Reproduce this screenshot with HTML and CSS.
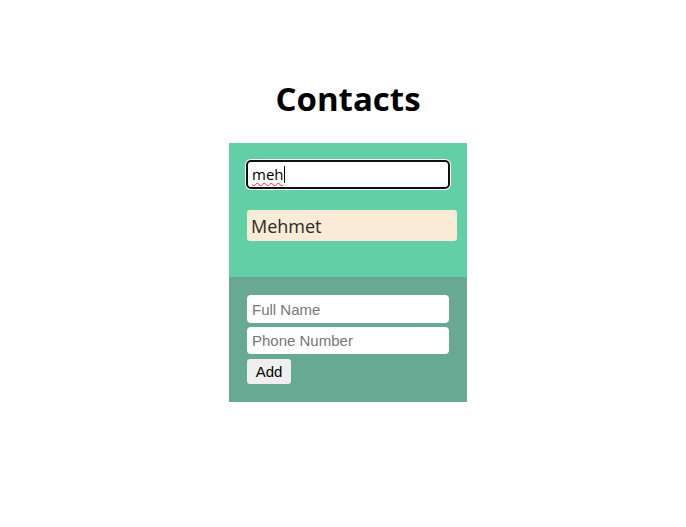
FILE: index.html
```html
<!DOCTYPE html>
<html>
<head>
<meta charset="utf-8">
<link rel="stylesheet" href="styles.css">
</head>
<body>
<div class="page">
  <h1 class="title">Contacts</h1>
  <div class="box">
    <div class="list-section">
      <div class="search">meh<span class="caret"></span></div>
      <ul class="list">
        <li class="item">Mehmet</li>
      </ul>
    </div>
    <div class="form-section">
      <input class="field" type="text" placeholder="Full Name">
      <input class="field" type="text" placeholder="Phone Number">
      <button class="add">Add</button>
    </div>
  </div>
</div>
</body>
</html>
```

FILE: styles.css
```css
html, body { margin: 0; padding: 0; background: #fff; }
body { font-family: "Open Sans", "Liberation Sans", sans-serif; }
.page {
  display: flex;
  flex-direction: column;
  align-items: center;
  padding-left: 10px;
  padding-top: 74px;
}
.title {
  margin: 0 0 20px 0;
  font-size: 33px;
  font-weight: 700;
  line-height: 49px;
  color: #000;
}
.box { width: 238px; }
.list-section {
  background: #62cfa6;
  padding: 17px 10px 36px 18px;
}
.search {
  box-sizing: border-box;
  width: 204px;
  height: 29px;
  margin-left: -1px;
  border: 2px solid #111;
  border-radius: 5px;
  background: #fff;
  box-shadow: 0 0 0 1px #fff;
  padding: 2px 0 0 4px;
  font-family: "Open Sans", sans-serif;
  font-size: 15px;
  line-height: 20px;
  color: #000;
  text-decoration: underline wavy #e53030;
  text-decoration-thickness: 1px;
  text-underline-offset: 2px;
}
.caret {
  display: inline-block;
  width: 1px;
  height: 17px;
  background: #000;
  vertical-align: -3px;
}
.list { list-style: none; margin: 21px 0 0 0; padding: 0; }
.item {
  background: #faebd7;
  border-radius: 3px;
  height: 31px;
  padding-left: 4px;
  font-size: 18px;
  line-height: 33px;
  color: #2a2a2a;
}
.form-section {
  background: #67a993;
  padding: 18px 18px 18px 18px;
  display: flex;
  flex-direction: column;
  align-items: flex-start;
  gap: 4px;
}
.field {
  box-sizing: border-box;
  width: 202px;
  height: 28px;
  border: none;
  border-radius: 4px;
  background: #fff;
  padding: 0 5px;
  font-family: "Liberation Sans", Arial, sans-serif;
  font-size: 15px;
  outline: none;
}
.field + .field { height: 27px; }
.field::placeholder { color: #777; }
.add {
  margin-top: 1px;
  height: 25px;
  width: 44px;
  border: none;
  border-radius: 3px;
  background: #efefef;
  font-family: "Liberation Sans", Arial, sans-serif;
  font-size: 15px;
  color: #000;
  padding: 0;
}
```
